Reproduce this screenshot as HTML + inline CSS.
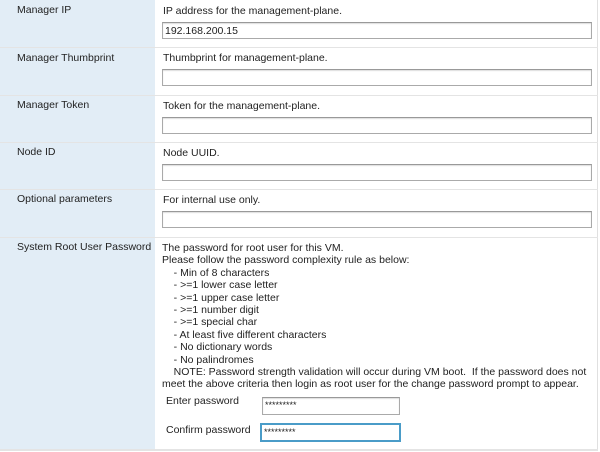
<!DOCTYPE html>
<html><head><style>
body{margin:0;width:600px;height:452px;background:#fff;font-family:"Liberation Sans",Arial,sans-serif;font-size:10.5px;color:#222;position:relative;overflow:hidden}
.left{position:absolute;left:0;top:0;width:155px;height:450px;background:#e2edf6}
.hl{position:absolute;left:0;width:598px;height:1px;background:#e4e4e4}
.vr{position:absolute;left:597px;top:0;width:1px;height:450px;background:#e0e0e0}
.t{position:absolute;white-space:pre;line-height:12.4px}
.in{position:absolute;left:162px;width:428px;height:15px;border:1px solid #aaa;border-top-color:#999;background:#fff;box-shadow:inset 0 1px 1px #ddd}
</style></head><body>
<div class="left"></div>
<div class="vr"></div>
<div class="hl" style="top:47px"></div>
<div class="hl" style="top:95px"></div>
<div class="hl" style="top:142px"></div>
<div class="hl" style="top:189px"></div>
<div class="hl" style="top:237px"></div>
<div class="hl" style="top:449px;height:2px"></div>

<div class="t" style="left:17px;top:4px">Manager IP</div>
<div class="t" style="left:163px;top:5px">IP address for the management-plane.</div>
<div class="in" style="top:22px"><span class="t" style="left:2px;top:2px">192.168.200.15</span></div>

<div class="t" style="left:17px;top:52px">Manager Thumbprint</div>
<div class="t" style="left:163px;top:52px">Thumbprint for management-plane.</div>
<div class="in" style="top:69px"></div>

<div class="t" style="left:17px;top:99px">Manager Token</div>
<div class="t" style="left:163px;top:100px">Token for the management-plane.</div>
<div class="in" style="top:117px"></div>

<div class="t" style="left:17px;top:146px">Node ID</div>
<div class="t" style="left:163px;top:147px">Node UUID.</div>
<div class="in" style="top:164px"></div>

<div class="t" style="left:17px;top:193px">Optional parameters</div>
<div class="t" style="left:163px;top:194px">For internal use only.</div>
<div class="in" style="top:211px"></div>

<div class="t" style="left:17px;top:241px">System Root User Password</div>
<div class="t" style="left:162px;top:242px">The password for root user for this VM.
Please follow the password complexity rule as below:
    - Min of 8 characters
    - &gt;=1 lower case letter
    - &gt;=1 upper case letter
    - &gt;=1 number digit
    - &gt;=1 special char
    - At least five different characters
    - No dictionary words
    - No palindromes
    NOTE: Password strength validation will occur during VM boot.  If the password does not
meet the above criteria then login as root user for the change password prompt to appear.</div>

<div class="t" style="left:166px;top:395px">Enter password</div>
<div class="in" style="left:262px;top:397px;width:136px;height:16px"><span class="t" style="left:2px;top:1px;font-size:9px">*********</span></div>
<div class="t" style="left:166px;top:424px">Confirm password</div>
<div class="in" style="left:260px;top:423px;width:137px;height:15px;border:2px solid #4a9cc8;box-shadow:none"><span class="t" style="left:2px;top:1px;font-size:9px">*********</span></div>
</body></html>
